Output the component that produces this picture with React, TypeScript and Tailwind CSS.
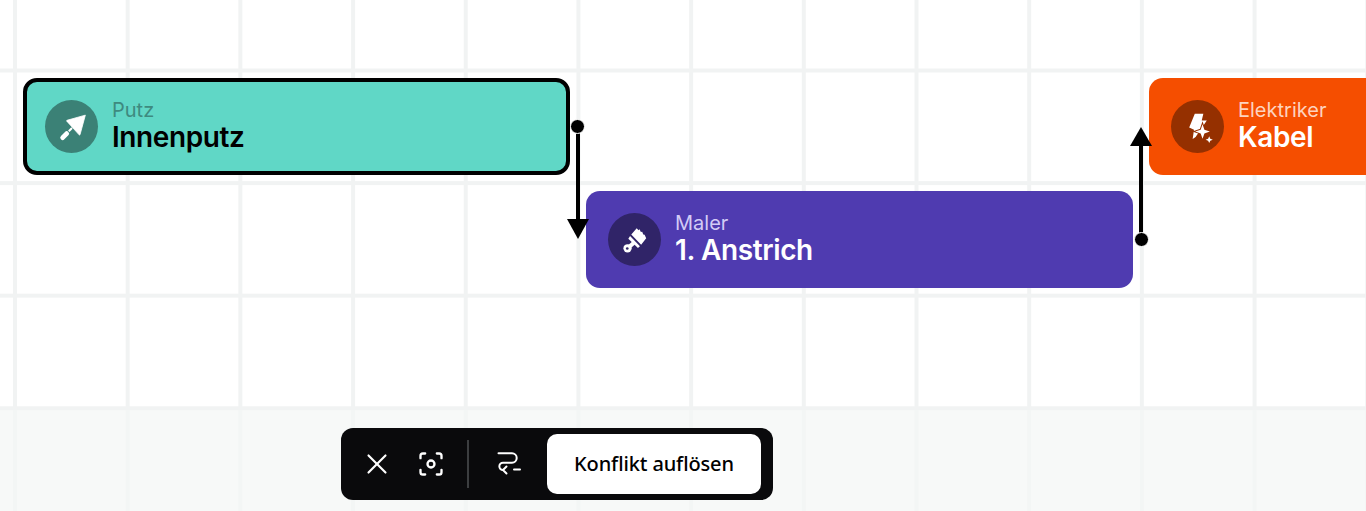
import { Focus, X } from "lucide-react";

const Trowel = () => (
  <svg viewBox="0 0 24 24" className="w-8 h-8" fill="white">
    <path d="M22 3.1 L8.2 7 Q7.8 7.2 8.1 7.6 L17.4 17.9 Q17.8 18.2 18 17.8 Z" stroke="white" strokeWidth="0.6" strokeLinejoin="round" />
    <path d="M9.6 15.2 L12 12.8" stroke="white" strokeWidth="1.5" fill="none" />
    <path d="M5 20 L8 17" stroke="white" strokeWidth="3.6" strokeLinecap="round" fill="none" />
  </svg>
);

const Brush = () => (
  <svg viewBox="0 0 24 24" className="w-8 h-8" fill="white">
    <path d="M13.3 3.2 L14.6 4.6 L15.4 4 L16.4 6 L17.4 5.8 L18.2 7.8 L19.2 8 L20.4 10.6 L16.6 15.6 L9.2 7.9 Z" />
    <path d="M8.3 9 L15.7 16.7 L14.2 18 L7 11 Z" />
    <path d="M11 14.2 L6.6 18" stroke="white" strokeWidth="3" fill="none" />
    <circle cx="6.4" cy="18.2" r="3.1" />
    <circle cx="6.2" cy="18.4" r="1" fill="#302468" />
  </svg>
);

const Bolt = () => (
  <svg viewBox="0 0 24 24" className="w-8 h-8" fill="white">
    <path d="M9.6 2.1 H16 L14.8 7.2 H18.6 L10.2 19.5 L8 21 L9 14 L5.4 12.4 Z" strokeLinejoin="round" />
    <path d="M15.4 9.9 L16.8 14 L20.9 15.4 L16.8 16.8 L15.4 20.9 L14 16.8 L9.9 15.4 L14 14 Z" stroke="#953000" strokeWidth="1.4" paintOrder="stroke" />
    <path d="M20.4 18.9 L21.2 20.8 L23.1 21.6 L21.2 22.4 L20.4 24 L19.6 22.4 L17.7 21.6 L19.6 20.8 Z" />
  </svg>
);

const RouteMinus = () => (
  <svg viewBox="0 0 24 24" className="w-6 h-6" fill="none" stroke="white" strokeWidth="2" strokeLinecap="round" strokeLinejoin="round">
    <path d="M1.5 1.3 H15 A4.7 4.7 0 0 1 15 10.7 H6 A3.65 3.65 0 0 0 6 18" />
    <path d="M9.5 14.5 L6 18 L9.5 21.5" />
    <path d="M17 17.5 H23" />
  </svg>
);

type NodeProps = {
  className: string;
  circle: string;
  labelColor: string;
  label: string;
  title: string;
  icon: React.ReactNode;
};

const Node = ({ className, circle, labelColor, label, title, icon }: NodeProps) => (
  <div className={`absolute flex items-center gap-[14px] rounded-[14px] ${className}`}>
    <div className={`w-[53px] h-[53px] rounded-full flex items-center justify-center shrink-0 ${circle}`}>
      {icon}
    </div>
    <div className="flex flex-col -mt-[3px]">
      <span className={`text-[20px] leading-[24px] ${labelColor}`}>{label}</span>
      <span className="text-[28px] leading-[30px] font-semibold tracking-[-0.4px]">{title}</span>
    </div>
  </div>
);

const Dot = ({ className }: { className: string }) => (
  <div className={`absolute w-[15px] h-[15px] rounded-full bg-black border border-white ${className}`} />
);

export default function App() {
  return (
    <div className="relative w-[1366px] h-[511px] overflow-hidden bg-white font-['Inter',sans-serif]">
      <div className="absolute inset-0 bg-[linear-gradient(to_right,#f1f3f3_4px,transparent_4px),linear-gradient(to_bottom,#f1f3f3_4px,transparent_4px)] bg-[size:112.7px_112.6px] bg-[position:13px_68.5px]" />
      <div className="absolute left-0 right-0 top-[410px] bottom-0 bg-[#f3f6f5]/70" />

      <Node
        className="left-[23px] top-[78px] w-[547px] h-[97px] pl-[18px] bg-[#60d7c6] border-4 border-black text-black"
        circle="bg-[#3b8176]"
        labelColor="text-[#3e8a7f]"
        label="Putz"
        title="Innenputz"
        icon={<Trowel />}
      />
      <Node
        className="left-[586px] top-[191px] w-[547px] h-[97px] pl-[22px] bg-[#4f3bb0] text-white"
        circle="bg-[#302468]"
        labelColor="text-[#d3cbf6]"
        label="Maler"
        title="1. Anstrich"
        icon={<Brush />}
      />
      <Node
        className="left-[1149px] top-[78px] w-[300px] h-[97px] pl-[22px] bg-[#f54e00] text-white"
        circle="bg-[#953000]"
        labelColor="text-[#fdd3bf]"
        label="Elektriker"
        title="Kabel"
        icon={<Bolt />}
      />

      <svg className="absolute left-0 top-0" width="1366" height="511" fill="black">
        <rect x="576" y="126" width="4" height="94" />
        <path d="M567 219 H589 L578 239 Z" />
        <rect x="1139" y="146" width="4" height="93" />
        <path d="M1130 146 H1152 L1141 127 Z" />
      </svg>
      <Dot className="left-[570px] top-[118.5px]" />
      <Dot className="left-[1133.5px] top-[231.5px]" />

      <div className="absolute left-[341px] top-[428px] w-[432px] h-[72px] bg-[#0a0a0c] rounded-[12px] flex items-center pl-[19px] pr-[12px] text-white">
        <X size={34} strokeWidth={1.5} />
        <Focus size={28} strokeWidth={2} className="ml-[23px]" />
        <div className="w-[2px] h-[48px] bg-[#3c3e40] ml-[22px]" />
        <div className="ml-[28px]">
          <RouteMinus />
        </div>
        <button className="ml-auto w-[214px] h-[60px] bg-white rounded-[10px] text-black text-[20px] font-medium tracking-[-0.12px] font-['Noto_Sans',sans-serif]">
          Konflikt auflösen
        </button>
      </div>
    </div>
  );
}
